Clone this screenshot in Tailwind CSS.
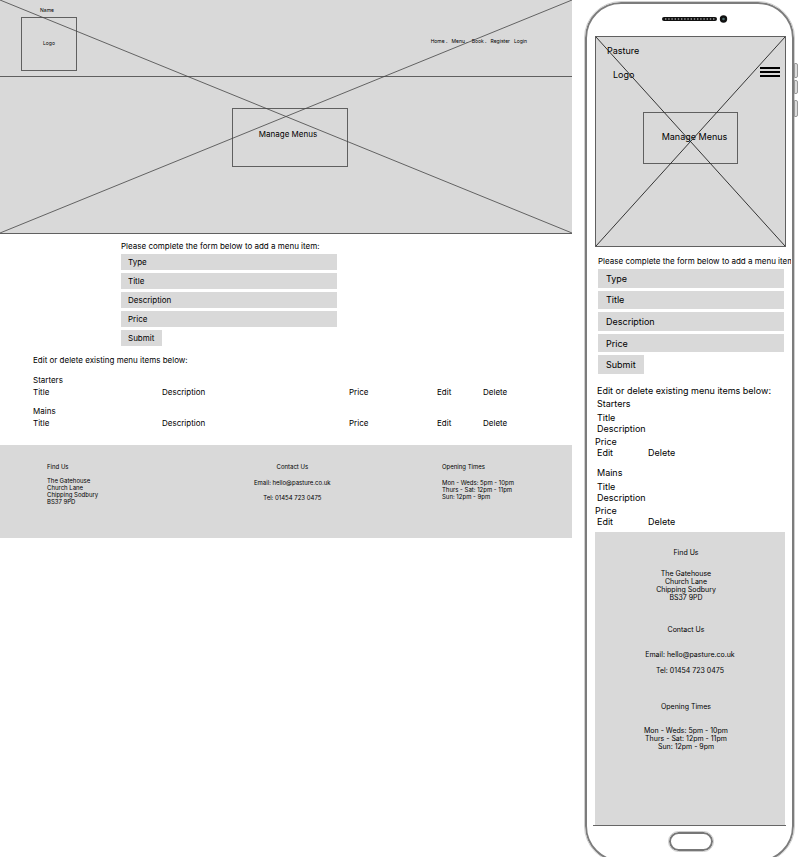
<!DOCTYPE html>
<html lang="en">
<head>
<meta charset="utf-8">
<meta name="viewport" content="width=device-width, initial-scale=1">
<title>Pasture - Manage Menus</title>
<script src="https://cdn.jsdelivr.net/npm/@tailwindcss/browser@4"></script>
</head>
<body class="bg-white text-black font-['Inter',sans-serif]">
<div class="flex items-start max-h-screen overflow-hidden">

  <!-- Desktop wireframe -->
  <div class="w-[71.5%] shrink-0 text-[8px] leading-[10px]">
    <div class="relative bg-[#d9d9d9] border-b border-[#606060]">
      <header class="flex items-start justify-between h-[77px] pl-[21px] pr-[45px] pt-[6px] border-b border-[#606060] text-[5px] leading-[8px]">
        <div class="w-[56px]">
          <p class="text-center pr-[4px]">Name</p>
          <div class="mt-[3px] h-[54px] border border-[#606060] flex items-center justify-center pb-[2px]">Logo</div>
        </div>
        <nav class="flex gap-[4px] pt-[31px]">
          <a href="#">Home .</a><a href="#">Menu .</a><a href="#">Book .</a><a href="#">Register</a><a href="#">Login</a>
        </nav>
      </header>
      <div class="flex justify-center pt-[31px] h-[156px] pl-[7px]">
        <h1 class="w-[116px] h-[59px] border border-[#606060] flex items-center justify-center pb-[7px] pr-[3px]">Manage Menus</h1>
      </div>
      <svg class="absolute inset-0 w-full h-full pointer-events-none" viewBox="0 0 572 233" preserveAspectRatio="none" aria-hidden="true"><path d="M0 0 572 233M0 233 572 0" fill="none" stroke="#444" stroke-width=".8"/></svg>
    </div>

    <main>
      <form class="ml-[121px] w-[216px] pt-[7px]">
        <p class="mb-[3px]">Please complete the form below to add a menu item:</p>
        <div class="flex flex-col items-start gap-[3px]">
          <input aria-label="Type" placeholder="Type" class="w-full h-[16px] bg-[#d9d9d9] px-[7px] placeholder:text-black">
          <input aria-label="Title" placeholder="Title" class="w-full h-[16px] bg-[#d9d9d9] px-[7px] placeholder:text-black">
          <input aria-label="Description" placeholder="Description" class="w-full h-[16px] bg-[#d9d9d9] px-[7px] placeholder:text-black">
          <input aria-label="Price" placeholder="Price" class="w-full h-[16px] bg-[#d9d9d9] px-[7px] placeholder:text-black">
          <button type="button" class="h-[16px] w-[41px] pl-[7px] text-left bg-[#d9d9d9]">Submit</button>
        </div>
      </form>
      <section class="pl-[33px] pt-[9px] pb-[17px]">
        <h2 class="mb-[10px]">Edit or delete existing menu items below:</h2>
        <h3 class="mb-[2px]">Starters</h3>
        <table class="w-full table-fixed mb-[9px]">
          <tbody><tr><td class="w-[129px]">Title</td><td class="w-[187px]">Description</td><td class="w-[88px]">Price</td><td class="w-[46px]"><a href="#">Edit</a></td><td><a href="#">Delete</a></td></tr></tbody>
        </table>
        <h3 class="mb-[2px]">Mains</h3>
        <table class="w-full table-fixed">
          <tbody><tr><td class="w-[129px]">Title</td><td class="w-[187px]">Description</td><td class="w-[88px]">Price</td><td class="w-[46px]"><a href="#">Edit</a></td><td><a href="#">Delete</a></td></tr></tbody>
        </table>
      </section>
    </main>

    <footer class="bg-[#d9d9d9] h-[93px] pt-[18px] pl-[47px] pr-[47px] grid grid-cols-[207fr_188fr_83fr] items-start justify-items-start text-[6px] leading-[7px] whitespace-nowrap">
      <section>
        <h2 class="mb-[7px]">Find Us</h2>
        <address class="not-italic">The Gatehouse<br>Church Lane<br>Chipping Sodbury<br>BS37 9PD</address>
      </section>
      <section class="text-center">
        <h2 class="mb-[9px]">Contact Us</h2>
        <p class="mb-[8px]">Email: hello@pasture.co.uk</p>
        <p>Tel: 01454 723 0475</p>
      </section>
      <section>
        <h2 class="mb-[9px]">Opening Times</h2>
        <p>Mon - Weds: 5pm - 10pm<br>Thurs - Sat: 12pm - 11pm<br>Sun: 12pm - 9pm</p>
      </section>
    </footer>
  </div>

  <!-- Phone wireframe -->
  <div class="flex-1 min-w-0 pl-[13px] pr-[6px] pt-[2px]">
    <div class="relative border-2 border-[#7c7c7c] rounded-[36px] outline outline-[#cfcfcf] pl-[8px] pr-[6px] h-[860px] text-[9px] leading-[11px]">
      <div class="absolute -right-[6px] top-[59px] w-[4px] h-[15px] border border-[#999] bg-[#ddd] rounded-r-[2px]"></div>
      <div class="absolute -right-[6px] top-[76px] w-[4px] h-[14px] border border-[#999] bg-[#ddd] rounded-r-[2px]"></div>
      <div class="absolute -right-[6px] top-[96px] w-[4px] h-[17px] border border-[#999] bg-[#ddd] rounded-r-[2px]"></div>

      <div class="h-[32px] pt-[11px] pl-[8px] flex justify-center">
        <svg width="66" height="8" viewBox="0 0 66 8" aria-hidden="true"><rect x="0" y="2" width="55" height="4" rx="2" fill="#111"/><path d="M3 4H53" stroke="#999" stroke-width="1.4" stroke-dasharray="1.4 1.8"/><circle cx="61.500" cy="4" r="3.700" fill="#111"/><circle cx="61.500" cy="4" r="1.300" fill="#4b6b6b"/></svg>
      </div>

      <div class="relative bg-[#d9d9d9] border border-[#606060] h-[211px] pt-[8px]">
        <header class="flex items-start justify-between pl-[11px] pr-[5px] h-[67px]">
          <div><p class="mb-[13px]">Pasture</p><p class="pl-[6px]">Logo</p></div>
          <button type="button" aria-label="Open menu" class="mt-[22px] flex flex-col gap-[2px] w-[20px]">
            <span class="block w-full h-[2px] bg-black"></span><span class="block w-full h-[2px] bg-black"></span><span class="block w-full h-[2px] bg-black"></span>
          </button>
        </header>
        <h1 class="mx-auto w-[95px] h-[52px] border border-[#606060] flex items-center justify-center pl-[8px] pb-[3px]">Manage Menus</h1>
        <svg class="absolute inset-0 w-full h-full pointer-events-none" viewBox="0 0 189 209" preserveAspectRatio="none" aria-hidden="true"><path d="M0 0 189 209M0 209 189 0" fill="none" stroke="#222" stroke-width=".9"/></svg>
      </div>

      <form class="pl-[3px] pr-[2px] pt-[9px]">
        <p class="text-[8px] leading-[10px] mb-[3px] whitespace-nowrap overflow-hidden -mr-[7px]">Please complete the form below to add a menu item:</p>
        <div class="grid grid-rows-5 gap-[3px] h-[105px]">
          <input aria-label="Type" placeholder="Type" class="w-full min-h-0 bg-[#d9d9d9] px-[8px] placeholder:text-black">
          <input aria-label="Title" placeholder="Title" class="w-full min-h-0 bg-[#d9d9d9] px-[8px] placeholder:text-black">
          <input aria-label="Description" placeholder="Description" class="w-full min-h-0 bg-[#d9d9d9] px-[8px] placeholder:text-black">
          <input aria-label="Price" placeholder="Price" class="w-full min-h-0 bg-[#d9d9d9] px-[8px] placeholder:text-black">
          <button type="button" class="w-[46px] min-h-0 pl-[8px] text-left bg-[#d9d9d9]">Submit</button>
        </div>
      </form>

      <section class="pt-[11px]">
        <h2 class="pl-[2px] mb-[2px] whitespace-nowrap">Edit or delete existing menu items below:</h2>
        <h3 class="pl-[2px] mb-[3px]">Starters</h3>
        <ul class="mb-[9px]">
          <li class="pl-[2px]">Title</li>
          <li class="pl-[2px] mb-[2px]">Description</li>
          <li>Price</li>
          <li class="pl-[2px] flex"><a href="#" class="w-[51px]">Edit</a><a href="#">Delete</a></li>
        </ul>
        <h3 class="pl-[2px] mb-[3px]">Mains</h3>
        <ul>
          <li class="pl-[2px]">Title</li>
          <li class="pl-[2px] mb-[2px]">Description</li>
          <li>Price</li>
          <li class="pl-[2px] flex"><a href="#" class="w-[51px]">Edit</a><a href="#">Delete</a></li>
        </ul>
      </section>

      <footer class="mt-[5px] mr-[1px] h-[293px] bg-[#d9d9d9] pt-[17px] text-center text-[7px] leading-[8px]">
        <section class="mb-[24px] pr-[8px]">
          <h2 class="mb-[13px]">Find Us</h2>
          <address class="not-italic">The Gatehouse<br>Church Lane<br>Chipping Sodbury<br>BS37 9PD</address>
        </section>
        <section class="mb-[28px]">
          <h2 class="mb-[17px] pr-[8px]">Contact Us</h2>
          <p class="mb-[8px]">Email: hello@pasture.co.uk</p>
          <p>Tel: 01454 723 0475</p>
        </section>
        <section class="pr-[8px]">
          <h2 class="mb-[16px]">Opening Times</h2>
          <p>Mon - Weds: 5pm - 10pm<br>Thurs - Sat: 12pm - 11pm<br>Sun: 12pm - 9pm</p>
        </section>
      </footer>
      <div class="-ml-[2px] border-t border-[#666]"></div>
      <button type="button" aria-label="Home" class="block mx-auto mt-[6px] w-[44px] h-[19px] rounded-full border-2 border-[#777] outline outline-[#ccc]"></button>
    </div>
  </div>
</div>
</body>
</html>
